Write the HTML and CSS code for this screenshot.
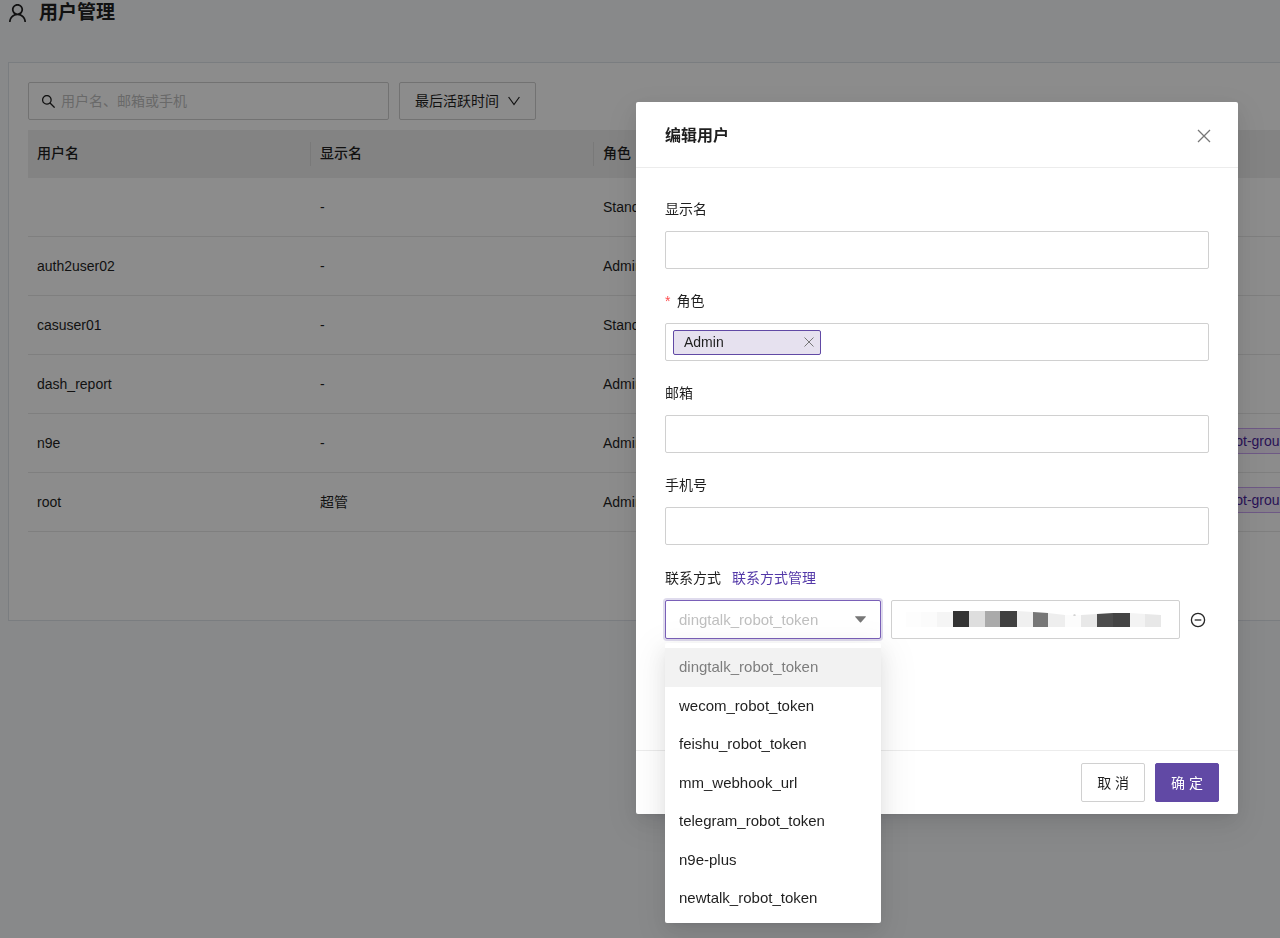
FILE: index.html
```html
<!DOCTYPE html>
<html lang="zh-CN">
<head>
<meta charset="utf-8">
<meta name="viewport" content="width=device-width, initial-scale=1">
<title>用户管理</title>
<link rel="stylesheet" href="styles.css">
</head>
<body>
<div class="page">
  <header class="page-header">
    <svg class="icon-user" viewBox="136 114 752 796" aria-hidden="true"><path d="M858.5 763.6a374 374 0 00-80.600-119.500 375.630 375.630 0 00-119.500-80.600c-.4-.2-.8-.3-1.200-.5C719.500 518 760 444.700 760 362c0-137-111-248-248-248S264 225 264 362c0 82.700 40.500 156 102.800 201.100-.4.2-.8.3-1.200.5-44.800 18.900-85 46-119.500 80.600a375.630 375.630 0 00-80.600 119.500A371.700 371.700 0 00136 901.800a8 8 0 008 8.200h60c4.400 0 7.900-3.500 8-7.800 2-77.200 33-149.500 87.800-204.300 56.700-56.700 132-87.900 212.200-87.900s155.500 31.200 212.200 87.900C779 752.700 810 825 812 902.200c.1 4.400 3.600 7.800 8 7.800h60a8 8 0 008-8.200c-1-47.800-10.900-94.300-29.500-138.200zM512 534c-45.900 0-89.100-17.900-121.600-50.400S340 407.900 340 362c0-45.900 17.900-89.100 50.400-121.600S466.100 190 512 190s89.100 17.900 121.600 50.400S684 316.100 684 362c0 45.900-17.900 89.100-50.400 121.600S557.900 534 512 534z"/></svg>
    <h1 class="page-title">用户管理</h1>
  </header>

  <main class="panel">
    <div class="toolbar">
      <label class="search">
        <svg class="icon-search" viewBox="112 112 800 800" aria-hidden="true"><path d="M909.6 854.5L649.9 594.8C690.2 542.7 712 479 712 412c0-80.200-31.300-155.400-87.900-212.100-56.600-56.700-132-87.900-212.100-87.900s-155.500 31.300-212.100 87.900C143.200 256.500 112 331.800 112 412c0 80.100 31.300 155.500 87.900 212.100C256.500 680.800 331.800 712 412 712c67 0 130.600-21.800 182.700-62l259.700 259.600a8.200 8.200 0 0011.600 0l43.600-43.500a8.200 8.200 0 000-11.600zM570.400 570.400C528 612.700 471.800 636 412 636s-116-23.300-158.400-65.600C211.300 528 188 471.800 188 412s23.300-116.100 65.600-158.400C296 211.300 352.200 188 412 188s116.100 23.200 158.400 65.600S636 352.200 636 412s-23.300 116.100-65.600 158.400z"/></svg>
        <input class="search-input" type="text" placeholder="用户名、邮箱或手机" aria-label="用户名、邮箱或手机">
      </label>
      <button class="btn sort" type="button">最后活跃时间
        <svg class="icon-down" viewBox="0 0 12 10" aria-hidden="true"><path d="M.6 1L6 8.500 11.400 1"/></svg>
      </button>
    </div>
    <table class="users">
      <thead>
        <tr><th>用户名</th><th>显示名</th><th>角色</th><th></th><th></th></tr>
      </thead>
      <tbody>
        <tr><td></td><td>-</td><td>Standard</td><td></td><td></td></tr>
        <tr><td>auth2user02</td><td>-</td><td>Admin</td><td></td><td></td></tr>
        <tr><td>casuser01</td><td>-</td><td>Standard</td><td></td><td></td></tr>
        <tr><td>dash_report</td><td>-</td><td>Admin</td><td></td><td></td></tr>
        <tr><td>n9e</td><td>-</td><td>Admin</td><td></td><td><span class="team">robot-group</span></td></tr>
        <tr><td>root</td><td>超管</td><td>Admin</td><td></td><td><span class="team">robot-group</span></td></tr>
      </tbody>
    </table>
  </main>
</div>

<div class="mask">
  <form class="modal" role="dialog" aria-labelledby="modal-title">
    <header class="modal-header">
      <h2 class="modal-title" id="modal-title">编辑用户</h2>
      <button class="icon-btn" type="button" aria-label="关闭">
        <svg class="icon-close" viewBox="0 0 14 14" aria-hidden="true"><path d="M1 1l12 12M13 1L1 13"/></svg>
      </button>
    </header>

    <div class="modal-body">
      <div class="field">
        <label class="label" for="nickname">显示名</label>
        <input class="control" id="nickname" type="text">
      </div>
      <div class="field">
        <label class="label" for="roles"><span class="required">*</span>角色</label>
        <div class="control tags">
          <span class="tag">Admin
            <button class="icon-btn" type="button" aria-label="移除 Admin"><svg class="icon-remove" viewBox="0 0 10 10" aria-hidden="true"><path d="M.5.5l9 9M9.500.5l-9 9"/></svg></button>
          </span>
          <input class="tags-input" id="roles" type="text">
        </div>
      </div>
      <div class="field">
        <label class="label" for="email">邮箱</label>
        <input class="control" id="email" type="text">
      </div>
      <div class="field">
        <label class="label" for="phone">手机号</label>
        <input class="control" id="phone" type="text">
      </div>
      <div class="field">
        <div class="label-row">
          <label class="label" for="contact">联系方式</label>
          <a class="link" href="#">联系方式管理</a>
        </div>
        <div class="contact">
          <div class="picker">
            <select class="control picker-select" id="contact"><option>dingtalk_robot_token</option></select>
            <svg class="icon-caret" viewBox="0 0 12 7" aria-hidden="true"><path d="M.6 0h10.800q.9 0 .3.700L6.600 6.500q-.6.700-1.200 0L.3.700Q-.3 0 .6 0z"/></svg>
            <ul class="menu" role="listbox" aria-label="联系方式">
              <li class="option selected" role="option" aria-selected="true">dingtalk_robot_token</li>
              <li class="option" role="option">wecom_robot_token</li>
              <li class="option" role="option">feishu_robot_token</li>
              <li class="option" role="option">mm_webhook_url</li>
              <li class="option" role="option">telegram_robot_token</li>
              <li class="option" role="option">n9e-plus</li>
              <li class="option" role="option">newtalk_robot_token</li>
            </ul>
          </div>
          <div class="secret">
            <input class="control" type="text" aria-label="联系方式的值">
            <svg class="mosaic" viewBox="0 0 256 16" aria-hidden="true">
              <path fill="#fdfdfd" d="M0 1h15v15H0z"/>
              <path fill="#fbfbfb" d="M15 1h16v15H15z"/>
              <path fill="#f5f5f5" d="M31 1h16v15H31z"/>
              <path fill="#333333" d="M47 0h16v16H47z"/>
              <path fill="#dedede" d="M63 0h16v16H63z"/>
              <path fill="#aaaaaa" d="M79 0h15v16H79z"/>
              <path fill="#404040" d="M94 0h17v16H94z"/>
              <path fill="#f0f0f0" d="M111 0l16 1v15h-16z"/>
              <path fill="#777777" d="M127 1l15 1v14h-15z"/>
              <path fill="#eeeeee" d="M142 2l17 2v12h-17z"/>
              <path fill="#fcfcfc" d="M159 4h16v12h-16z"/>
              <path fill="#aaaaaa" d="M167 4q1.500-1 3 0-1.500 1-3 0z"/>
              <path fill="#e8e8e8" d="M175 4l16-1v13h-16z"/>
              <path fill="#4d4d4d" d="M191 3l16-1v14h-16z"/>
              <path fill="#444444" d="M207 2h17v14h-17z"/>
              <path fill="#f3f3f3" d="M224 2l15 1v13h-15z"/>
              <path fill="#e8e8e8" d="M239 3l16 1v12h-16z"/>
            </svg>
          </div>
          <button class="icon-btn" type="button" aria-label="删除">
            <svg class="icon-minus" viewBox="0 0 16 16" aria-hidden="true"><circle cx="8" cy="8" r="6.600"/><path d="M4.700 8h6.600"/></svg>
          </button>
        </div>
      </div>
    </div>

    <footer class="modal-footer">
      <button class="btn" type="button">取 消</button>
      <button class="btn primary" type="button">确 定</button>
    </footer>
  </form>
</div>
</body>
</html>
```

FILE: styles.css
```css
* { box-sizing: border-box; }

body,
button,
input,
select {
  font-family: "Liberation Sans", "Noto Sans CJK SC", sans-serif;
  font-size: 14px;
  line-height: 24px;
  color: #1f1f1f;
}

body {
  margin: 0;
  overflow: hidden;
  background: #f7f9fc;
}

button,
input,
select { margin: 0; }

svg {
  display: block;
  flex: none;
  fill: none;
  stroke: currentColor;
}

.page { min-height: 100vh; }

.page-header {
  display: flex;
  align-items: center;
  gap: 13px;
  height: 26px;
  padding-left: 9px;
}

.page-title {
  margin: 0;
  font-size: 19px;
  font-weight: 700;
}

.icon-user,
.icon-search {
  fill: currentColor;
  stroke: none;
}

.icon-user { width: 17px; height: 18px; }
.icon-search { width: 13px; height: 13px; }

.panel {
  margin: 36px 0 0 8px;
  padding: 19px 0 88px 19px;
  border: 1px solid #dfe3ea;
  border-right: 0;
  background: #fff;
}

.toolbar {
  display: flex;
  gap: 10px;
  margin-bottom: 10px;
}

.search {
  display: flex;
  align-items: center;
  gap: 6px;
  width: 361px;
  height: 38px;
  padding: 0 13px;
  border: 1px solid #d0d0d0;
  border-radius: 2px;
}

.search-input {
  flex: 1;
  min-width: 0;
  padding: 0;
  border: 0;
  outline: 0;
  background: none;
}

.search-input::placeholder { color: #bfbfbf; }
.icon-down { width: 12px; height: 10px; stroke-width: 1.2; }

.btn {
  display: inline-flex;
  align-items: center;
  justify-content: center;
  gap: 9px;
  height: 38px;
  padding: 0 15px;
  border: 1px solid #d0d0d0;
  border-radius: 2px;
  background: #fff;
}

.btn.primary {
  border-color: #6149a5;
  background: #6149a5;
  color: #fff;
}

.users {
  width: 100%;
  border-collapse: separate;
  border-spacing: 0;
  table-layout: fixed;
}

.users th,
.users td {
  height: 59px;
  padding: 0 9px;
  border-bottom: 1px solid #e8e8e8;
  text-align: left;
}

.users th {
  width: 283px;
  height: 48px;
  padding-bottom: 2px;
  border: 0;
  background: linear-gradient(#dcdcdc, #dcdcdc) right center / 1px 24px no-repeat #efefef;
  font-weight: 500;
}

.users th:nth-child(n + 3) { background: #efefef; }
.users th:nth-child(4) { width: auto; }
.users th:last-child { width: 83px; }

.users td:last-child {
  padding: 0 0 4px;
  white-space: nowrap;
  overflow: hidden;
}

.team {
  display: inline-block;
  margin-left: 8px;
  padding: 0 9px;
  border: 1px solid #c8a2f2;
  background: #f3eafb;
  color: #4a1f9c;
}

.mask {
  position: fixed;
  inset: 0;
  display: flex;
  align-items: flex-start;
  justify-content: flex-end;
  padding: 102px 42px 0 0;
  background: rgba(0, 0, 0, 0.45);
}

.modal {
  width: 602px;
  border-radius: 2px;
  background: #fff;
  box-shadow: 0 4px 7px -5px rgba(0, 0, 0, 0.12), 0 7px 19px rgba(0, 0, 0, 0.08), 0 11px 34px 10px rgba(0, 0, 0, 0.05);
}

.modal-header {
  display: flex;
  align-items: center;
  justify-content: space-between;
  height: 66px;
  padding: 2px 27px 0 29px;
  border-bottom: 1px solid #ececec;
}

.modal-title {
  margin: 0;
  font-size: 16px;
  font-weight: 600;
}

.icon-btn {
  display: inline-flex;
  padding: 0;
  border: 0;
  background: none;
  color: #777;
}

.icon-close { width: 14px; height: 14px; stroke-width: 1.3; }
.icon-remove { width: 10px; height: 10px; }

.modal-body {
  display: grid;
  gap: 20px;
  padding: 29px 29px 111px;
}

.field {
  display: grid;
  gap: 10px;
}

.label-row {
  display: flex;
  align-items: flex-end;
  gap: 11px;
  height: 25px;
}

.required {
  margin-right: 6px;
  color: #ff4d4f;
}

.link {
  color: #5338a8;
  text-decoration: none;
}

.control {
  display: block;
  width: 100%;
  height: 38px;
  padding: 0 14px;
  border: 1px solid #d0d0d0;
  border-radius: 2px;
  outline: 0;
  background: #fff;
}

.tags {
  display: flex;
  align-items: center;
  gap: 5px;
  padding: 0 7px;
}

.tag {
  display: flex;
  align-items: center;
  justify-content: space-between;
  width: 148px;
  height: 25px;
  padding: 0 6px 0 10px;
  border: 1px solid #6149a5;
  border-radius: 2px;
  background: #e6e1ef;
}

.tags-input {
  flex: 1;
  min-width: 0;
  border: 0;
  outline: 0;
  background: none;
}

.contact {
  display: grid;
  grid-template-columns: 3fr 4fr 19px;
  align-items: center;
  gap: 10px;
}

.contact .control { height: 39px; }

.picker,
.secret { position: relative; }

.picker-select {
  appearance: none;
  padding: 0 13px;
  border-color: #7a60b8;
  box-shadow: 0 0 0 2px rgba(97, 73, 165, 0.2);
  color: #bfbfbf;
  font-size: 15px;
}

.icon-caret {
  position: absolute;
  top: 16px;
  right: 15px;
  width: 11px;
  height: 7px;
  fill: #777;
  stroke: none;
}

.menu {
  position: absolute;
  top: calc(100% + 4px);
  left: 0;
  width: 100%;
  margin: 0;
  padding: 5px 0;
  border-radius: 2px;
  background: #fff;
  box-shadow: 0 4px 7px -5px rgba(0, 0, 0, 0.12), 0 7px 19px rgba(0, 0, 0, 0.08), 0 11px 34px 10px rgba(0, 0, 0, 0.05);
  list-style: none;
}

.option {
  padding: 8px 14px;
  font-size: 15px;
  line-height: 1.5;
  white-space: nowrap;
}

.option.selected {
  background: #f2f2f2;
  color: #7d7d7d;
}

.mosaic {
  position: absolute;
  top: 11px;
  left: 15px;
  width: 256px;
  height: 16px;
  stroke: none;
}

.contact > .icon-btn { color: #262626; }
.icon-minus { width: 16px; height: 16px; stroke-width: 1.3; }

.modal-footer {
  display: flex;
  justify-content: flex-end;
  gap: 10px;
  padding: 12px 19px;
  border-top: 1px solid #ececec;
}

.modal-footer .btn { height: 39px; }
```
